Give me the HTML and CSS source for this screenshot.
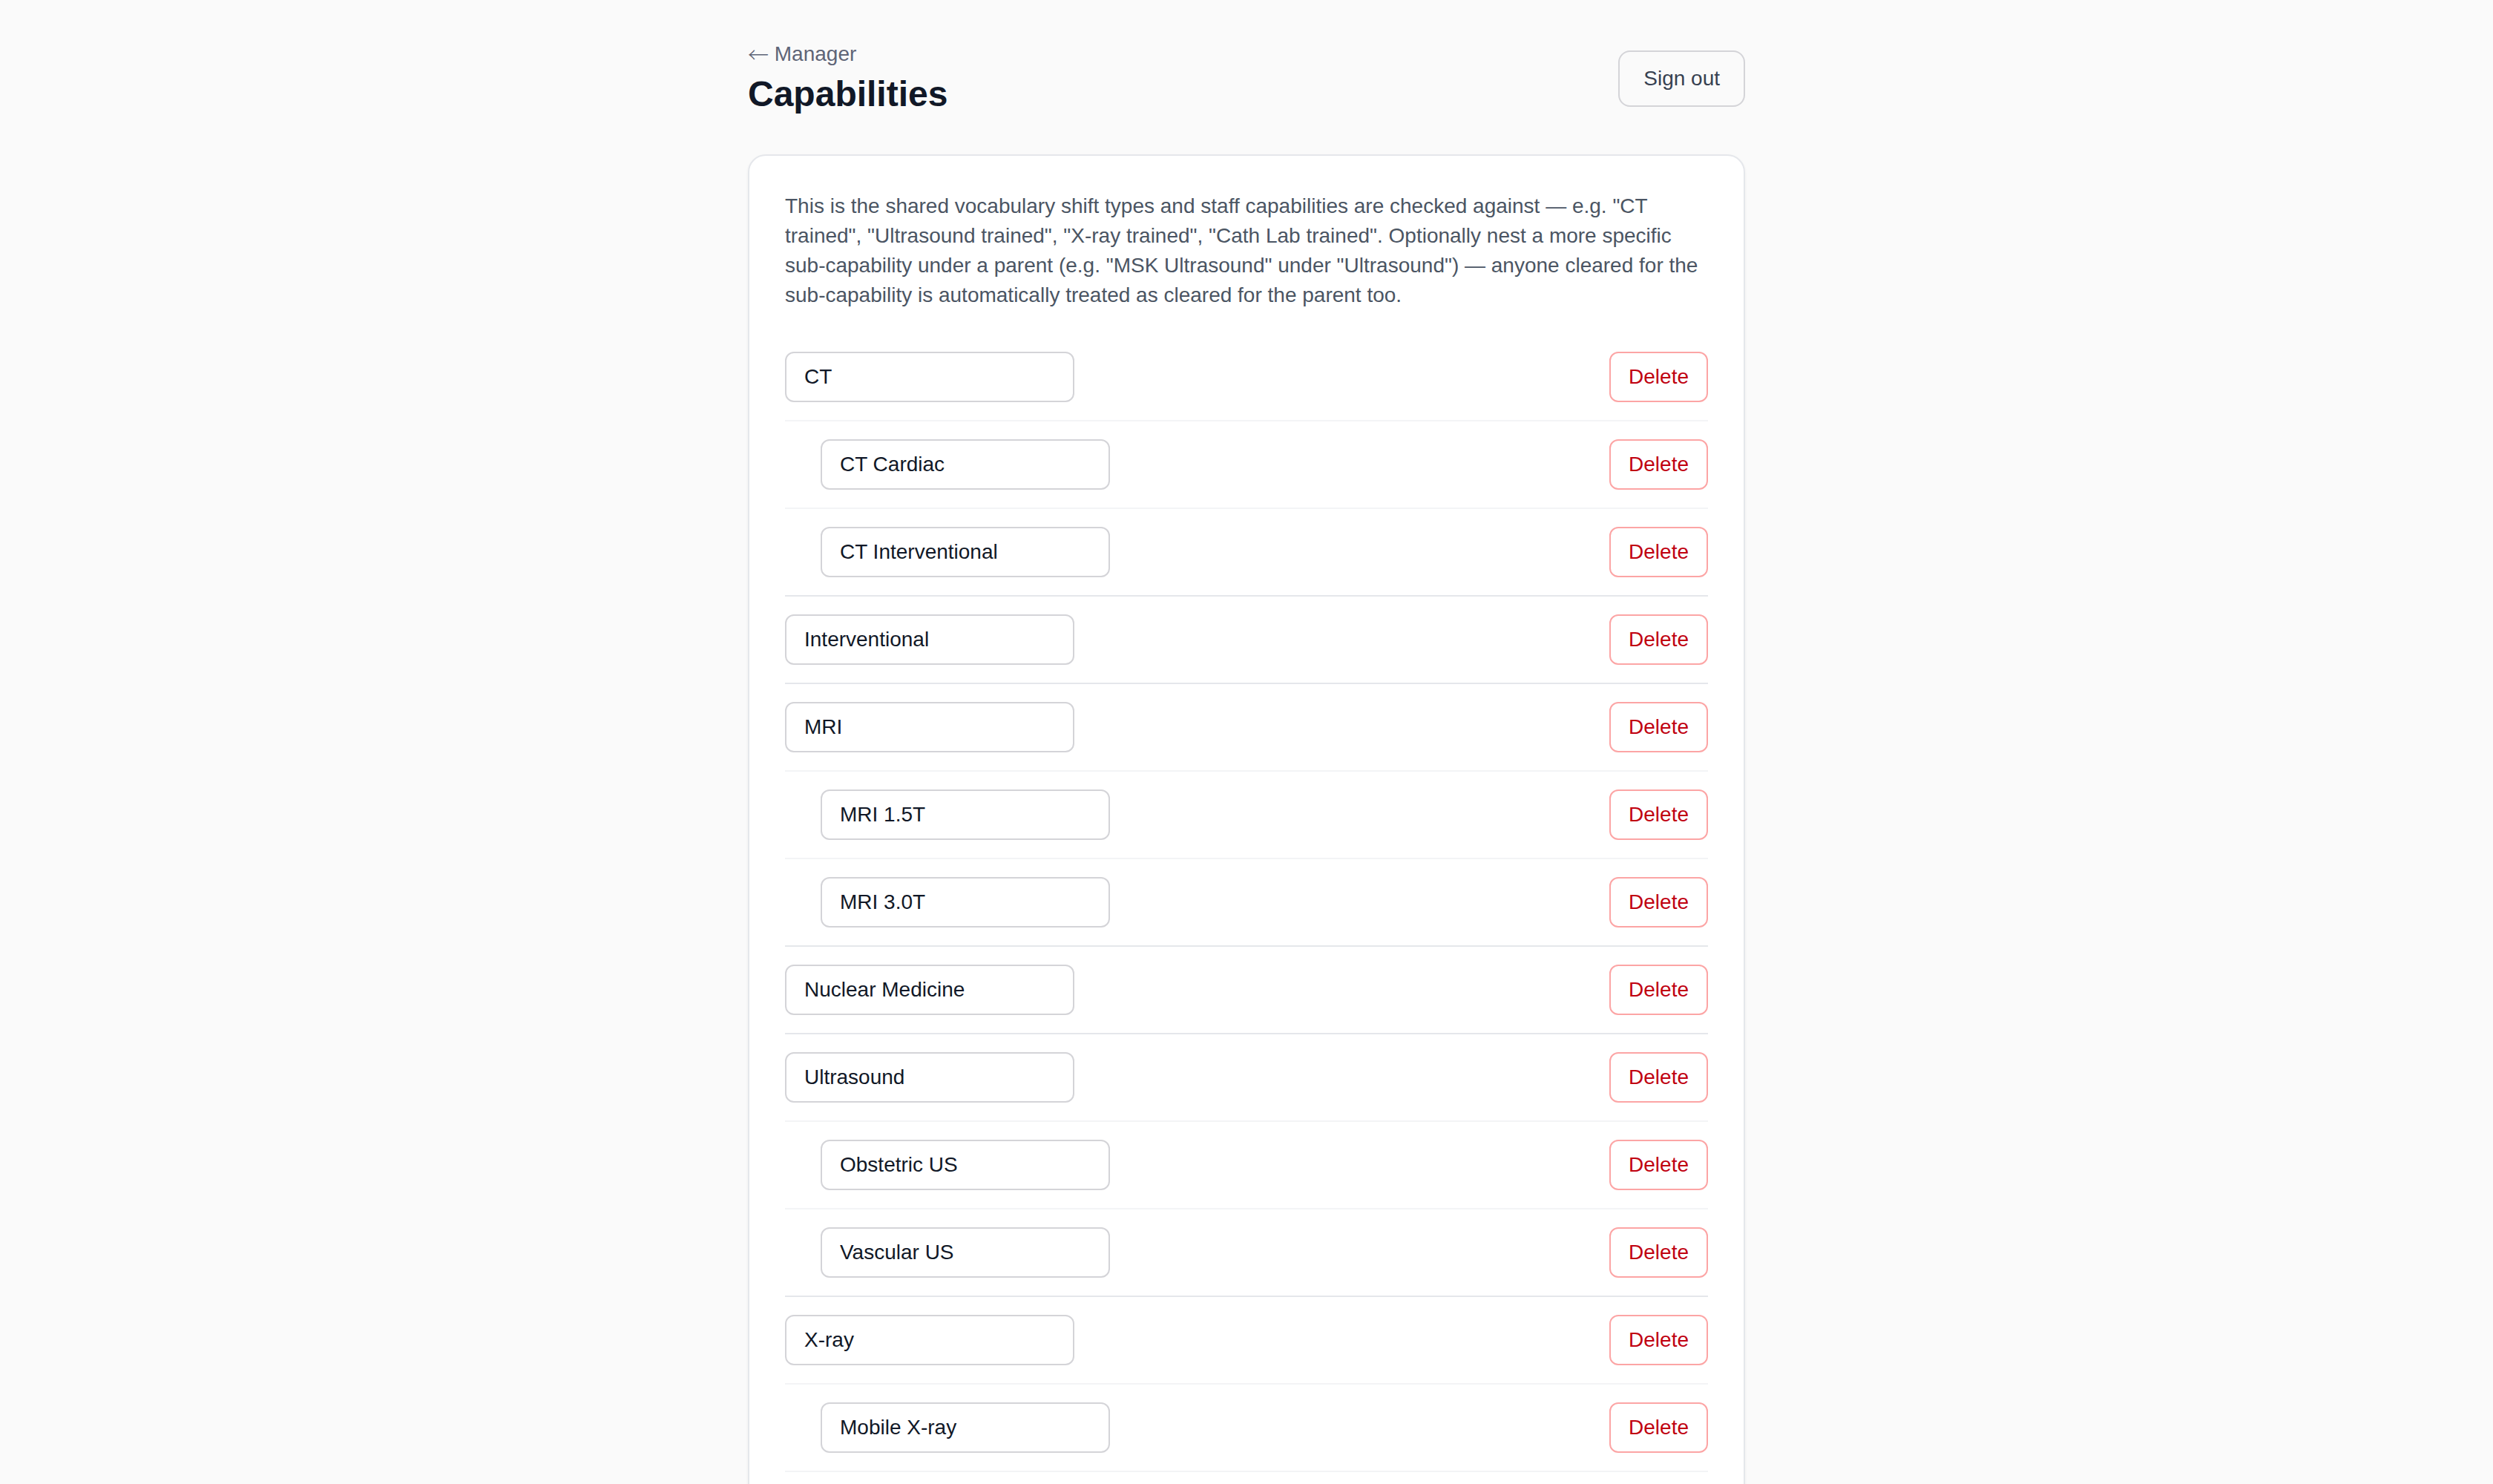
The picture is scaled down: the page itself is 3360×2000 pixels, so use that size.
FILE: index.html
```html
<!DOCTYPE html>
<html lang="en">
<head>
<meta charset="utf-8">
<title>Capabilities</title>
<link rel="stylesheet" href="styles.css">
</head>
<body>
<div class="page">
  <header class="page-header">
    <div class="titles">
      <a class="back-link" href="#"><span class="arrow">←</span> Manager</a>
      <h1 class="title">Capabilities</h1>
    </div>
    <button class="btn-outline" type="button">Sign out</button>
  </header>

  <section class="card">
    <p class="intro">This is the shared vocabulary shift types and staff capabilities are checked against — e.g. "CT trained", "Ultrasound trained", "X-ray trained", "Cath Lab trained". Optionally nest a more specific sub-capability under a parent (e.g. "MSK Ultrasound" under "Ultrasound") — anyone cleared for the sub-capability is automatically treated as cleared for the parent too.</p>

    <div class="cap-list">
      <div class="cap-group">
        <div class="cap-row"><input class="cap-input" type="text" value="CT"><button class="btn-delete" type="button">Delete</button></div>
        <div class="cap-row child"><input class="cap-input" type="text" value="CT Cardiac"><button class="btn-delete" type="button">Delete</button></div>
        <div class="cap-row child"><input class="cap-input" type="text" value="CT Interventional"><button class="btn-delete" type="button">Delete</button></div>
      </div>
      <div class="cap-group">
        <div class="cap-row"><input class="cap-input" type="text" value="Interventional"><button class="btn-delete" type="button">Delete</button></div>
      </div>
      <div class="cap-group">
        <div class="cap-row"><input class="cap-input" type="text" value="MRI"><button class="btn-delete" type="button">Delete</button></div>
        <div class="cap-row child"><input class="cap-input" type="text" value="MRI 1.5T"><button class="btn-delete" type="button">Delete</button></div>
        <div class="cap-row child"><input class="cap-input" type="text" value="MRI 3.0T"><button class="btn-delete" type="button">Delete</button></div>
      </div>
      <div class="cap-group">
        <div class="cap-row"><input class="cap-input" type="text" value="Nuclear Medicine"><button class="btn-delete" type="button">Delete</button></div>
      </div>
      <div class="cap-group">
        <div class="cap-row"><input class="cap-input" type="text" value="Ultrasound"><button class="btn-delete" type="button">Delete</button></div>
        <div class="cap-row child"><input class="cap-input" type="text" value="Obstetric US"><button class="btn-delete" type="button">Delete</button></div>
        <div class="cap-row child"><input class="cap-input" type="text" value="Vascular US"><button class="btn-delete" type="button">Delete</button></div>
      </div>
      <div class="cap-group">
        <div class="cap-row"><input class="cap-input" type="text" value="X-ray"><button class="btn-delete" type="button">Delete</button></div>
        <div class="cap-row child"><input class="cap-input" type="text" value="Mobile X-ray"><button class="btn-delete" type="button">Delete</button></div>
      </div>
    </div>
  </section>
</div>
</body>
</html>
```

FILE: styles.css
```css
html, body {
  margin: 0;
  padding: 0;
}

body {
  background: #fafafa;
  font-family: "Liberation Sans", Arial, sans-serif;
  color: #111827;
}

.page {
  max-width: 1344px;
  margin: 0 auto;
  padding: 53px 0 96px;
}

.page-header {
  display: flex;
  align-items: center;
  justify-content: space-between;
  margin-bottom: 49px;
}

.back-link {
  display: block;
  height: 40px;
  font-size: 28px;
  line-height: 40px;
  color: #5f6577;
  text-decoration: none;
}

.arrow {
  font-family: "Noto Sans CJK JP", "DejaVu Sans", sans-serif;
  font-weight: 300;
  line-height: 0;
  vertical-align: -3px;
}

.title {
  margin: 2px 0 0;
  font-size: 48px;
  line-height: 64px;
  font-weight: 700;
  color: #111827;
}

.btn-outline {
  font-family: inherit;
  font-size: 28px;
  line-height: 40px;
  padding: 16px 32px;
  border: 2px solid #d4d4d8;
  border-radius: 16px;
  background: transparent;
  color: #374151;
}

.card {
  background: #ffffff;
  border: 2px solid #e5e7eb;
  border-radius: 24px;
  padding: 48px;
  box-shadow: 0 2px 4px rgba(0, 0, 0, 0.05);
}

.intro {
  margin: 0 0 32px;
  font-size: 28px;
  line-height: 40px;
  color: #4b5563;
}

.cap-list {
  border-bottom: 2px solid #f3f4f6;
}

.cap-group + .cap-group {
  border-top: 2px solid #e5e7eb;
}

.cap-row {
  display: flex;
  align-items: center;
  justify-content: space-between;
  padding: 24px 0;
}

.cap-row + .cap-row {
  border-top: 2px solid #f3f4f6;
}

.cap-row.child {
  padding-left: 48px;
}

.cap-input {
  box-sizing: border-box;
  width: 390px;
  height: 68px;
  padding: 12px 24px;
  border: 2px solid #d4d4d8;
  border-radius: 12px;
  background: #ffffff;
  font-family: inherit;
  font-size: 28px;
  line-height: 40px;
  color: #111827;
}

.btn-delete {
  font-family: inherit;
  font-size: 28px;
  line-height: 40px;
  padding: 12px 24px;
  border: 2px solid #fca5a5;
  border-radius: 12px;
  background: #ffffff;
  color: #c00010;
}
```
